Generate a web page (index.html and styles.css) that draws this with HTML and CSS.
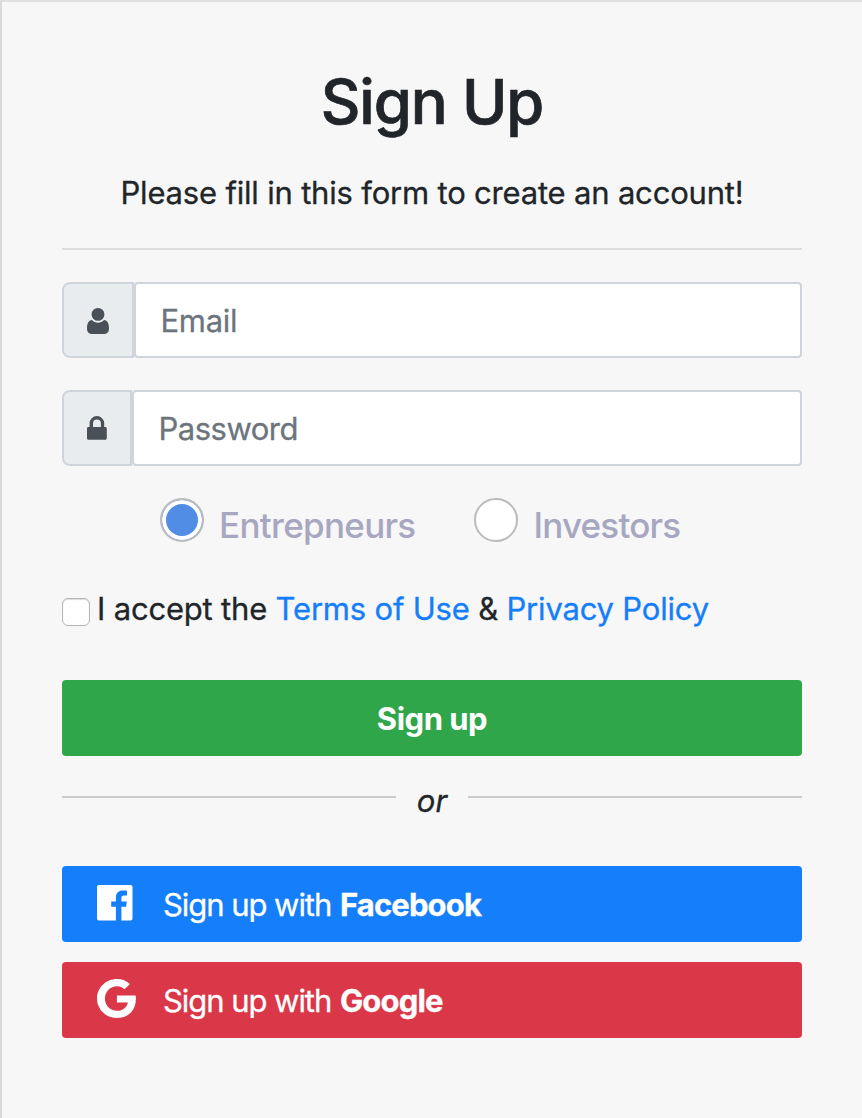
FILE: index.html
```html
<!DOCTYPE html>
<html lang="en">
<head>
<meta charset="utf-8">
<title>Sign Up</title>
<link rel="stylesheet" href="styles.css">
</head>
<body>
<form class="signup-form">
  <h1 class="title">Sign Up</h1>
  <p class="intro">Please fill in this form to create an account!</p>
  <hr class="rule">
  <div class="input-group">
    <span class="addon addon-user"><svg class="icon-user" viewBox="0 0 22 26"><circle cx="11" cy="6.4" r="6.4"/><path d="M5 12c1.600 1.800 3.700 2.700 6 2.700s4.400-.9 6-2.700c3.600.2 5 3.800 5 8.800 0 3-1.900 5.200-4.400 5.200H4.400C1.900 26 0 23.800 0 20.800 0 15.800 1.400 12.200 5 12z"/></svg></span>
    <input class="field field-email" type="email" placeholder="Email">
  </div>
  <div class="input-group">
    <span class="addon addon-lock"><svg class="icon-lock" viewBox="0 0 20 24"><path fill-rule="evenodd" d="M2.600 11V7.400a7.300 7.300 0 0 1 14.600 0V11h1.100c.9 0 1.500.6 1.500 1.500v9.800c0 .9-.6 1.500-1.500 1.500H1.500C.6 23.800 0 23.200 0 22.300v-9.800C0 11.600.6 11 1.500 11zM6 11h7.900V7.400a3.950 3.950 0 0 0-7.900 0z"/></svg></span>
    <input class="field field-password" type="password" placeholder="Password">
  </div>
  <div class="roles">
    <label class="role"><input class="radio" type="radio" name="role" checked><span class="role-name">Entrepneurs</span></label>
    <label class="role"><input class="radio" type="radio" name="role"><span class="role-name role-investors">Investors</span></label>
  </div>
  <div class="terms">
    <input class="check" id="accept" type="checkbox">
    <label class="terms-text" for="accept">I accept the <a class="link" href="#">Terms of Use</a> &amp; <a class="link" href="#">Privacy Policy</a></label>
  </div>
  <button class="btn btn-signup" type="button">Sign up</button>
  <div class="divider"><i class="or">or</i></div>
  <a class="btn btn-social btn-facebook" href="#">
    <span class="social-icon"><svg class="icon-facebook" viewBox="0 0 36 36"><path d="M2 0h31.500a2 2 0 0 1 2 2v31.500a2 2 0 0 1-2 2h-9.100V21.700h4.700l.7-5.300h-5.400V13c0-1.600.5-2.600 2.700-2.600h2.900V5.700c-.5-.1-2.200-.2-4.200-.2-4.100 0-6.900 2.500-6.900 7.100v3.800h-4.700v5.300h4.700v13.800H2a2 2 0 0 1-2-2V2a2 2 0 0 1 2-2z"/></svg></span>
    <span class="social-text">Sign up with <b class="provider">Facebook</b></span>
  </a>
  <a class="btn btn-social btn-google" href="#">
    <span class="social-icon"><svg class="icon-google" viewBox="0 0 39 39"><path d="M19.900 16.600h18.700c.2 1 .3 2 .3 3.300C38.900 31.200 31.300 39 19.900 39 9 39 0 30.300 0 19.500S9 0 19.900 0c5.300 0 9.700 1.900 13 5.100l-5.300 5.100c-1.400-1.400-4-3-7.700-3-6.600 0-12 5.400-12 12.300s5.400 12.300 12 12.300c7.600 0 10.500-5.400 11-8.400h-11z"/></svg></span>
    <span class="social-text">Sign up with <b class="provider">Google</b></span>
  </a>
</form>
</body>
</html>
```
FILE: styles.css
```css
* { box-sizing: border-box; }
body {
  margin: 0;
  background: #f7f7f7;
  color: #212529;
  font: 31px/48px Inter, "Liberation Sans", sans-serif;
}
.signup-form {
  min-height: 1118px;
  padding: 60px 60px 78px;
  border-top: 2px solid #e0e0e0;
  border-left: 2px solid #dadada;
}
.title {
  margin: 0;
  font-size: 61.5px;
  line-height: 80px;
  font-weight: 500;
  text-align: center;
  letter-spacing: -1.1px;
  -webkit-text-stroke: 0.7px currentColor;
}
.intro {
  margin: 27px 0 31px;
  text-align: center;
  letter-spacing: -0.19px;
  -webkit-text-stroke: 0.3px currentColor;
}
.rule { height: 2px; margin: 0 0 32px; border: 0; background: #dedede; }
.input-group { display: flex; height: 76px; margin-bottom: 32px; }
.addon {
  display: flex;
  align-items: center;
  justify-content: center;
  border: 2px solid #ced4da;
  border-radius: 8px 0 0 8px;
  background: #e9ecef;
}
.addon-user { width: 72px; padding-top: 2px; }
.addon-lock { width: 70px; }
.icon-user { width: 22px; height: 26px; fill: #495057; }
.icon-lock { width: 20px; height: 24px; fill: #495057; }
.field {
  flex: 1;
  min-width: 0;
  padding: 2px 24px 0 24.5px;
  border: 2px solid #ced4da;
  border-radius: 4px;
  background: #fff;
  font: inherit;
  letter-spacing: -0.3px;
  -webkit-text-stroke: 0.3px currentColor;
}
.field-password { letter-spacing: -0.5px; }
.field::placeholder { color: #6c757d; opacity: 1; }
.roles { display: flex; gap: 58px; height: 44px; margin-left: 98px; }
.role { display: flex; align-items: center; }
.radio {
  appearance: none;
  width: 44px;
  height: 44px;
  margin: 0 15px 0 0;
  border: 2px solid #bbb;
  border-radius: 50%;
  background: #fff;
}
.radio:checked { background: #528de5; box-shadow: inset 0 0 0 4px #fff; }
.role-name {
  padding-top: 10px;
  font-size: 35px;
  font-weight: 500;
  letter-spacing: -0.7px;
  color: #a7a7c1;
}
.role-investors { margin-left: 1px; letter-spacing: -0.8px; }
.terms { display: flex; height: 48px; margin: 43px 0 47px; }
.check {
  appearance: none;
  width: 28px;
  height: 28px;
  margin: 13px 7px 0 0;
  border: 1px solid #b5b5b5;
  border-radius: 6px;
  background: #fff;
  box-shadow: inset 0 1px 1px #ddd;
}
.terms-text {
  line-height: 48px;
  white-space: nowrap;
  letter-spacing: -0.19px;
  -webkit-text-stroke: 0.3px currentColor;
}
.link { color: #157efb; text-decoration: none; }
.btn {
  display: flex;
  align-items: center;
  width: 100%;
  height: 76px;
  border: 0;
  border-radius: 4px;
  color: #fff;
  text-decoration: none;
}
.btn-signup {
  justify-content: center;
  padding: 2px 0 0;
  background: #30a64a;
  font: 700 31px/48px Inter, "Liberation Sans", sans-serif;
  letter-spacing: -0.5px;
}
.divider { display: flex; align-items: center; height: 48px; margin: 17px 0 45px; }
.divider::before, .divider::after {
  content: "";
  flex: 1;
  height: 2px;
  background: #ccc;
}
.or { width: 72px; padding-top: 8px; text-align: center; -webkit-text-stroke: 0.3px currentColor; }
.btn-social { padding: 0 35px; }
.btn-facebook { margin-bottom: 20px; background: #157efb; }
.btn-google { background: #da3849; }
.social-icon { display: flex; width: 66px; }
.icon-facebook { width: 36px; height: 36px; margin-bottom: 2px; fill: #fff; }
.icon-google { width: 39px; height: 39px; margin-bottom: 3px; fill: #fff; }
.social-text { padding-top: 2px; letter-spacing: -1.05px; -webkit-text-stroke: 0.3px currentColor; }
.provider { margin-left: 1px; font-weight: 700; letter-spacing: -0.85px; }
```
